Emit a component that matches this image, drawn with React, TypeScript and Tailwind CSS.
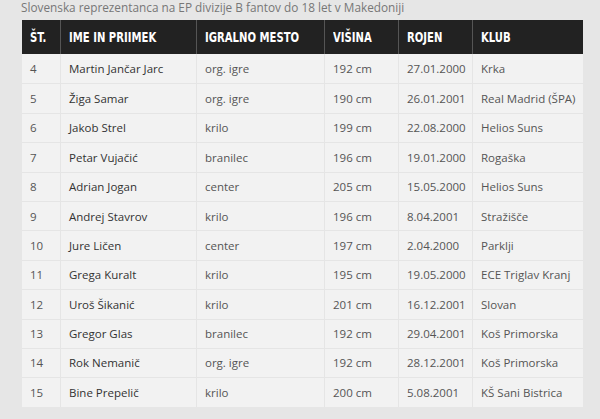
import React from 'react';

type Player = {
    no: number;
    name: string;
    pos: string;
    height: string;
    born: string;
    club: string;
};

const players: Player[] = [
    { no: 4, name: "Martin Jančar Jarc", pos: "org. igre", height: "192 cm", born: "27.01.2000", club: "Krka" },
    { no: 5, name: "Žiga Samar", pos: "org. igre", height: "190 cm", born: "26.01.2001", club: "Real Madrid (ŠPA)" },
    { no: 6, name: "Jakob Strel", pos: "krilo", height: "199 cm", born: "22.08.2000", club: "Helios Suns" },
    { no: 7, name: "Petar Vujačić", pos: "branilec", height: "196 cm", born: "19.01.2000", club: "Rogaška" },
    { no: 8, name: "Adrian Jogan", pos: "center", height: "205 cm", born: "15.05.2000", club: "Helios Suns" },
    { no: 9, name: "Andrej Stavrov", pos: "krilo", height: "196 cm", born: "8.04.2001", club: "Stražišče" },
    { no: 10, name: "Jure Ličen", pos: "center", height: "197 cm", born: "2.04.2000", club: "Parklji" },
    { no: 11, name: "Grega Kuralt", pos: "krilo", height: "195 cm", born: "19.05.2000", club: "ECE Triglav Kranj" },
    { no: 12, name: "Uroš Šikanić", pos: "krilo", height: "201 cm", born: "16.12.2001", club: "Slovan" },
    { no: 13, name: "Gregor Glas", pos: "branilec", height: "192 cm", born: "29.04.2001", club: "Koš Primorska" },
    { no: 14, name: "Rok Nemanič", pos: "org. igre", height: "192 cm", born: "28.12.2001", club: "Koš Primorska" },
    { no: 15, name: "Bine Prepelič", pos: "krilo", height: "200 cm", born: "5.08.2001", club: "KŠ Sani Bistrica" },
];

const columns = [
    { label: "ŠT.", width: "w-[38px]" },
    { label: "IME IN PRIIMEK", width: "w-[136px]" },
    { label: "IGRALNO MESTO", width: "w-[128px]" },
    { label: "VIŠINA", width: "w-[74px]" },
    { label: "ROJEN", width: "w-[74px]" },
    { label: "KLUB", width: "w-[111px]" },
];

const App = () => {
    return (
        <div className="w-[600px] h-[419px] overflow-hidden bg-[#e6e6e6] font-['Open_Sans',sans-serif]">
            {/* caption */}
            <div className="h-[20px] pl-[21px] text-[11.8px] leading-[14px] text-[#777] whitespace-nowrap">
                Slovenska reprezentanca na EP divizije B fantov do 18 let v Makedoniji
            </div>

            <div className="ml-[22px] w-[561px] bg-[#f2f2f2]">
                {/* header */}
                <div className="flex h-[34px] bg-[#222] text-white font-['DejaVu_Sans_Condensed',sans-serif] font-bold text-[14px]">
                    {columns.map((c, i) => (
                        <div
                            key={c.label}
                            className={`${c.width} flex items-center pl-2 ${i > 0 ? "border-l border-[#555]" : ""}`}
                        >
                            <span className="inline-block origin-left scale-x-[0.8] whitespace-nowrap">{c.label}</span>
                        </div>
                    ))}
                </div>

                {/* rows */}
                {players.map((p, r) => (
                    <div
                        key={p.no}
                        className={`flex h-[29.4px] text-[11.5px] text-[#555] whitespace-nowrap ${r > 0 ? "border-t border-[#e5e5e5]" : ""}`}
                    >
                        <div className="w-[38px] flex items-center pl-2">{p.no}</div>
                        <div className="w-[136px] flex items-center pl-2 border-l border-[#e5e5e5] text-[#333]">{p.name}</div>
                        <div className="w-[128px] flex items-center pl-2 border-l border-[#e5e5e5]">{p.pos}</div>
                        <div className="w-[74px] flex items-center pl-2 border-l border-[#e5e5e5]">{p.height}</div>
                        <div className="w-[74px] flex items-center pl-2 border-l border-[#e5e5e5]">{p.born}</div>
                        <div className="w-[111px] flex items-center pl-2 border-l border-[#e5e5e5]">{p.club}</div>
                    </div>
                ))}
            </div>
        </div>
    );
};

export default App;
